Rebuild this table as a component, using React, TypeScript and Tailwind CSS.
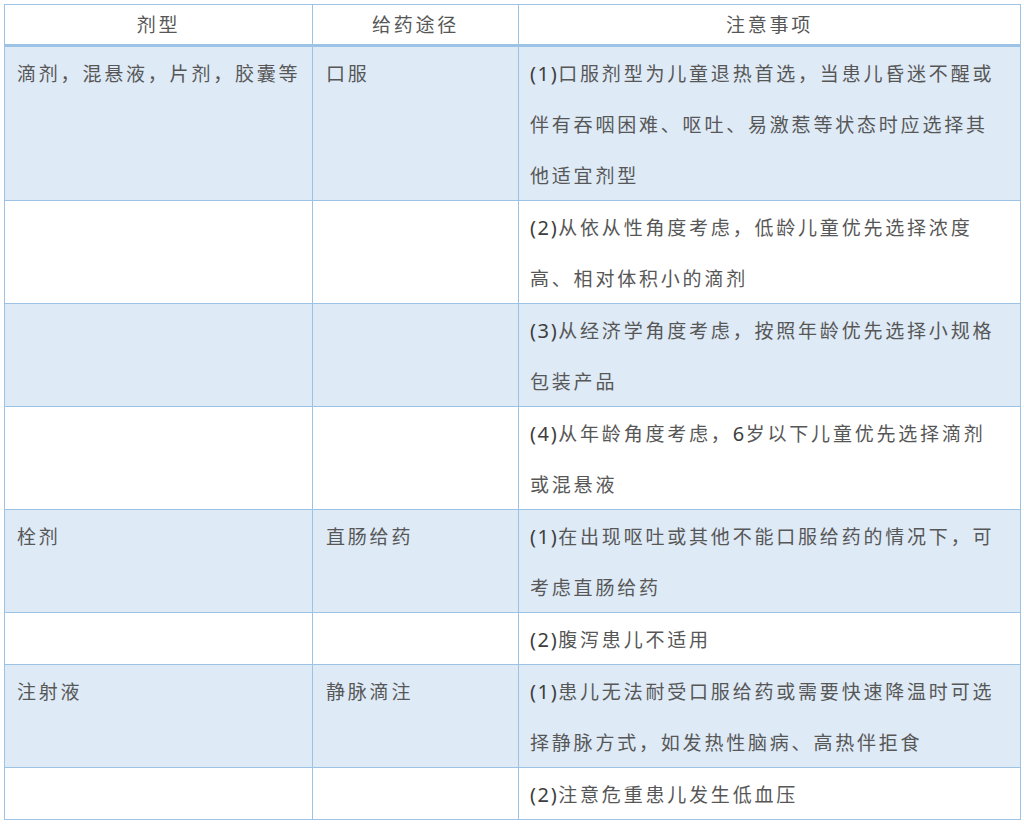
import React from "react";

const P = ({ t }: { t: string }) => (
  <span className="text-[#3d3d3d] text-[20px] leading-[1] tracking-[1.6px]">{t}</span>
);

const data: { a: string; b: string; c: string[]; blue: boolean }[] = [
  {
    a: "滴剂，混悬液，片剂，胶囊等",
    b: "口服",
    c: [
      "(1)口服剂型为儿童退热首选，当患儿昏迷不醒或",
      "伴有吞咽困难、呕吐、易激惹等状态时应选择其",
      "他适宜剂型",
    ],
    blue: true,
  },
  { a: "", b: "", c: ["(2)从依从性角度考虑，低龄儿童优先选择浓度", "高、相对体积小的滴剂"], blue: false },
  { a: "", b: "", c: ["(3)从经济学角度考虑，按照年龄优先选择小规格", "包装产品"], blue: true },
  { a: "", b: "", c: ["(4)从年龄角度考虑，6岁以下儿童优先选择滴剂", "或混悬液"], blue: false },
  { a: "栓剂", b: "直肠给药", c: ["(1)在出现呕吐或其他不能口服给药的情况下，可", "考虑直肠给药"], blue: true },
  { a: "", b: "", c: ["(2)腹泻患儿不适用"], blue: false },
  { a: "注射液", b: "静脉滴注", c: ["(1)患儿无法耐受口服给药或需要快速降温时可选", "择静脉方式，如发热性脑病、高热伴拒食"], blue: true },
  { a: "", b: "", c: ["(2)注意危重患儿发生低血压"], blue: false },
];

function renderLine(l: string) {
  const parts = l.split(/(\(\d\)|\d)/).filter((s) => s !== "");
  return parts.map((p, k) => (/^(\(\d\)|\d)$/.test(p) ? <P key={k} t={p} /> : <span key={k}>{p}</span>));
}

export default function App() {
  return (
    <div
      className="bg-white pt-[4px] pl-[4px] text-[#575757]"
      style={{ fontFamily: '"Noto Sans", "Noto Sans CJK SC", sans-serif' }}
    >
      <table className="w-[1016px] table-fixed border-collapse text-[19px] tracking-[2.8px]">
        <colgroup>
          <col className="w-[308px]" />
          <col className="w-[206px]" />
          <col className="w-[502px]" />
        </colgroup>
        <thead>
          <tr className="h-[41px] bg-white">
            <th className="border border-b-[3px] border-[#9CC2E5] p-0 text-center font-normal leading-[38px]">剂型</th>
            <th className="border border-b-[3px] border-[#9CC2E5] p-0 text-center font-normal leading-[38px]">给药途径</th>
            <th className="border border-b-[3px] border-[#9CC2E5] p-0 text-center font-normal leading-[38px]">注意事项</th>
          </tr>
        </thead>
        <tbody>
          {data.map((r, i) => (
            <tr key={i} className={r.blue ? "bg-[#DEEAF6]" : "bg-white"}>
              <td className="border border-[#9CC2E5] py-0 pl-[12px] pr-[4px] align-top leading-[51px] whitespace-nowrap">
                <div className="h-[51px] translate-y-[2px]">{r.a}</div>
              </td>
              <td className="border border-[#9CC2E5] py-0 pl-[13px] pr-[4px] align-top leading-[51px] whitespace-nowrap">
                <div className="h-[51px] translate-y-[2px]">{r.b}</div>
              </td>
              <td className="border border-[#9CC2E5] py-0 pl-[11px] pr-[4px] align-top leading-[51px]">
                {r.c.map((l, j) => (
                  <div key={j} className="h-[51px] whitespace-nowrap translate-y-[2px]">{renderLine(l)}</div>
                ))}
              </td>
            </tr>
          ))}
        </tbody>
      </table>
    </div>
  );
}
